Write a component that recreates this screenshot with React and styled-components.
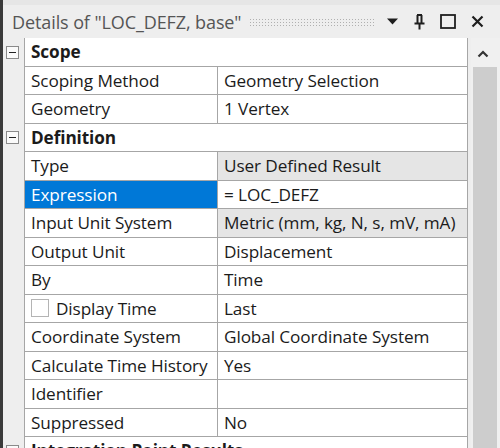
import React from "react";
import styled, { createGlobalStyle } from "styled-components";

const Global = createGlobalStyle`
  html, body { margin: 0; padding: 0; background: #f0f0f0; }
  body { font-family: "Open Sans", "Noto Sans", sans-serif; }
`;

const Window = styled.div`
  width: 500px;
  height: 448px;
  overflow: hidden;
  box-sizing: border-box;
  border-left: 3px solid #3a3a3a;
  background: #eeeeee;
  display: flex;
  flex-direction: column;
`;

const TitleBar = styled.div`
  height: 38px;
  flex: none;
  box-sizing: border-box;
  border-top: 5px solid #e6e6e6;
  display: flex;
  align-items: center;
  padding: 0 12px 0 9px;
  gap: 6px;
`;

const Title = styled.span`
  font-size: 18px;
  color: #555;
  white-space: nowrap;
  letter-spacing: -0.1px;
`;

const Dots = styled.div`
  flex: 1;
  height: 8px;
  margin: 0 2px;
  background-image: radial-gradient(#b0b0b0 0.9px, transparent 1px);
  background-size: 3px 3px;
`;

const IconButton = styled.span`
  width: ${(p) => p.$w || 22}px;
  height: 22px;
  display: flex;
  align-items: center;
  justify-content: center;
  color: #1e1e1e;
`;

const Body = styled.div`
  flex: 1;
  display: flex;
  min-height: 0;
`;

const Grid = styled.div`
  width: 468px;
  flex: none;
  display: flex;
  flex-direction: column;
`;

const Row = styled.div`
  height: 28.5px;
  flex: none;
  display: grid;
  grid-template-columns: 21px 193px 251px;
`;

const Gutter = styled.div`
  background: #eeeeee;
  display: flex;
  align-items: center;
  justify-content: flex-start;
  padding-left: 3px;
`;

const Expander = styled.span`
  width: 13px;
  height: 13px;
  box-sizing: border-box;
  border: 1px solid #8a8a8a;
  background: #fafafa;
  position: relative;
  &::after {
    content: "";
    position: absolute;
    left: 2px;
    right: 2px;
    top: 5px;
    height: 1px;
    background: #222;
  }
`;

const Cell = styled.div`
  box-sizing: border-box;
  border-bottom: 1px solid #a6a6a6;
  border-left: 1px solid #a6a6a6;
  border-right: ${(p) => (p.$last ? "1px solid #a6a6a6" : "none")};
  background: ${(p) => (p.$selected ? "#0078d7" : p.$readonly ? "#e5e5e5" : "#ffffff")};
  color: ${(p) => (p.$selected ? "#ffffff" : "#1b1b1b")};
  font-size: 17.2px;
  letter-spacing: -0.1px;
  display: flex;
  align-items: center;
  gap: 7px;
  padding-left: 6px;
  white-space: nowrap;
  overflow: hidden;
`;

const CategoryCell = styled(Cell)`
  grid-column: 2 / 4;
  border-right: 1px solid #a6a6a6;
  font-weight: 700;
  background: #ffffff;
`;

const Check = styled.span`
  width: 18px;
  height: 18px;
  box-sizing: border-box;
  border: 1px solid #b4b4b4;
  background: #fff;
  flex: none;
`;

const Scrollbar = styled.div`
  flex: 1;
  display: flex;
  flex-direction: column;
  background: #f0f0f0;
  padding-left: 2px;
`;

const ArrowBox = styled.div`
  height: 27px;
  display: flex;
  align-items: center;
  justify-content: center;
  padding: 2px 8px 0 0;
  color: #444;
`;

const Thumb = styled.div`
  flex: 1;
  width: 24px;
  background: #cdcdcd;
`;

const rows = [
  { cat: "Scope" },
  { label: "Scoping Method", value: "Geometry Selection" },
  { label: "Geometry", value: "1 Vertex" },
  { cat: "Definition" },
  { label: "Type", value: "User Defined Result", readonly: true },
  { label: "Expression", value: "= LOC_DEFZ", selected: true },
  { label: "Input Unit System", value: "Metric (mm, kg, N, s, mV, mA)", readonly: true },
  { label: "Output Unit", value: "Displacement" },
  { label: "By", value: "Time" },
  { label: "Display Time", value: "Last", check: true },
  { label: "Coordinate System", value: "Global Coordinate System" },
  { label: "Calculate Time History", value: "Yes" },
  { label: "Identifier", value: "" },
  { label: "Suppressed", value: "No" },
  { cat: "Integration Point Results" },
];

export default function App() {
  return (
    <>
      <Global />
      <Window>
        <TitleBar>
          <Title>Details of "LOC_DEFZ, base"</Title>
          <Dots />
          <IconButton $w={20}>
            <svg width="11" height="7" viewBox="0 0 11 7">
              <path d="M0 0.5 H11 L5.5 6.5 Z" fill="#1e1e1e" />
            </svg>
          </IconButton>
          <IconButton $w={22}>
            <svg width="11" height="16" viewBox="0 0 11 16">
              <path d="M3 1 H8 M3.5 1 V9 M7.5 1 V9 M0.5 9.5 H10.5 M5.5 9.5 V15.5" stroke="#1e1e1e" strokeWidth="2" fill="none" />
            </svg>
          </IconButton>
          <IconButton $w={24}>
            <svg width="16" height="15" viewBox="0 0 16 15">
              <rect x="1" y="1" width="14" height="13" stroke="#1e1e1e" strokeWidth="1.8" fill="none" />
            </svg>
          </IconButton>
          <IconButton $w={22}>
            <svg width="13" height="13" viewBox="0 0 13 13">
              <path d="M1.5 1.5 L11.5 11.5 M11.5 1.5 L1.5 11.5" stroke="#1e1e1e" strokeWidth="2.2" />
            </svg>
          </IconButton>
        </TitleBar>
        <Body>
          <Grid>
            {rows.map((r, i) =>
              r.cat ? (
                <Row key={i}>
                  <Gutter>
                    <Expander />
                  </Gutter>
                  <CategoryCell>{r.cat}</CategoryCell>
                </Row>
              ) : (
                <Row key={i}>
                  <Gutter />
                  <Cell $selected={r.selected}>
                    {r.check && <Check />}
                    {r.label}
                  </Cell>
                  <Cell $readonly={r.readonly} $last>
                    {r.value}
                  </Cell>
                </Row>
              )
            )}
          </Grid>
          <Scrollbar>
            <ArrowBox>
              <svg width="12" height="8" viewBox="0 0 12 8">
                <path d="M1.5 6.5 L6 2 L10.5 6.5" stroke="#333" strokeWidth="2.2" fill="none" />
              </svg>
            </ArrowBox>
            <Thumb />
          </Scrollbar>
        </Body>
      </Window>
    </>
  );
}
